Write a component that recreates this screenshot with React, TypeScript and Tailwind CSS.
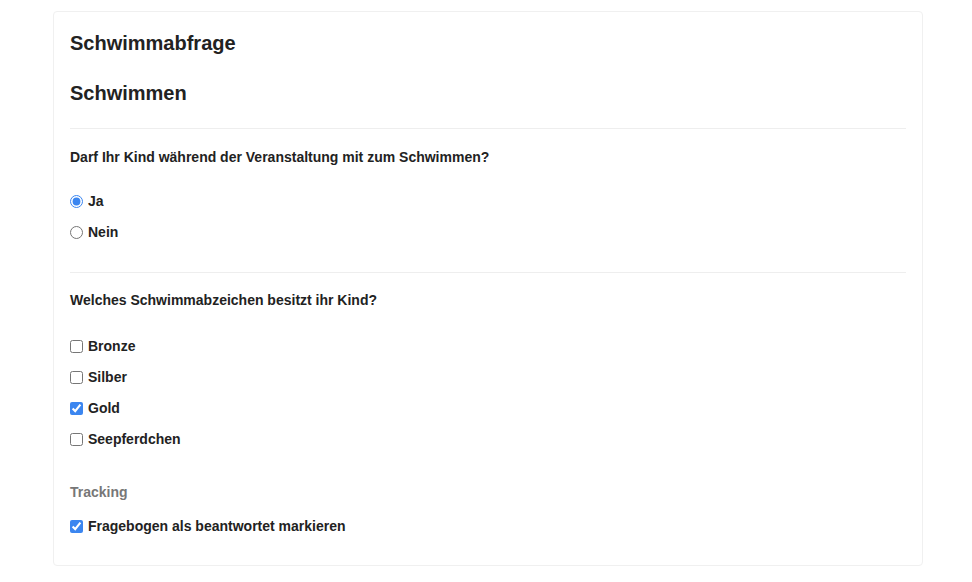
import { useState } from "react";

const badges = ["Bronze", "Silber", "Gold", "Seepferdchen"];

export default function App() {
  const [swim, setSwim] = useState("ja");
  const [checked, setChecked] = useState<Record<string, boolean>>({ Gold: true });
  const [done, setDone] = useState(true);

  return (
    <div className="min-h-[582px] bg-white pt-[11px] pl-[53px] text-[#222] font-['Liberation_Sans',Arial,sans-serif]">
      <div className="w-[870px] rounded border border-[#f0f0f0] px-4 pt-[19px] pb-[29px]">
        <h1 className="text-[20px] leading-6 font-bold">Schwimmabfrage</h1>
        <h2 className="mt-[26px] text-[20px] leading-6 font-bold">Schwimmen</h2>

        <hr className="mt-[23px] border-t border-[#eeeeee]" />

        {/* Frage 1 */}
        <p className="mt-[18px] text-sm leading-5 font-bold">
          Darf Ihr Kind während der Veranstaltung mit zum Schwimmen?
        </p>
        <div className="mt-6 flex flex-col gap-[11px]">
          {[
            ["ja", "Ja"],
            ["nein", "Nein"],
          ].map(([value, label]) => (
            <label key={value} className="flex h-5 items-center gap-[5px] text-sm font-bold">
              <input
                type="radio"
                name="swim"
                className="m-0 h-[13px] w-[13px] accent-[#3b86f0]"
                checked={swim === value}
                onChange={() => setSwim(value)}
              />
              {label}
            </label>
          ))}
        </div>

        <hr className="mt-[30px] border-t border-[#eeeeee]" />

        {/* Frage 2 */}
        <p className="mt-[17px] text-sm leading-5 font-bold">
          Welches Schwimmabzeichen besitzt ihr Kind?
        </p>
        <div className="mt-[26px] flex flex-col gap-[11px]">
          {badges.map((b) => (
            <label key={b} className="flex h-5 items-center gap-[5px] text-sm font-bold">
              <input
                type="checkbox"
                className="m-0 h-[13px] w-[13px] accent-[#3b86f0]"
                checked={!!checked[b]}
                onChange={() => setChecked({ ...checked, [b]: !checked[b] })}
              />
              {b}
            </label>
          ))}
        </div>

        <p className="mt-[33px] text-sm leading-5 font-bold text-[#777]">Tracking</p>
        <label className="mt-[14px] flex h-5 items-center gap-[5px] text-sm font-bold">
          <input
            type="checkbox"
            className="m-0 h-[13px] w-[13px] accent-[#3b86f0]"
            checked={done}
            onChange={() => setDone(!done)}
          />
          Fragebogen als beantwortet markieren
        </label>
      </div>
    </div>
  );
}
